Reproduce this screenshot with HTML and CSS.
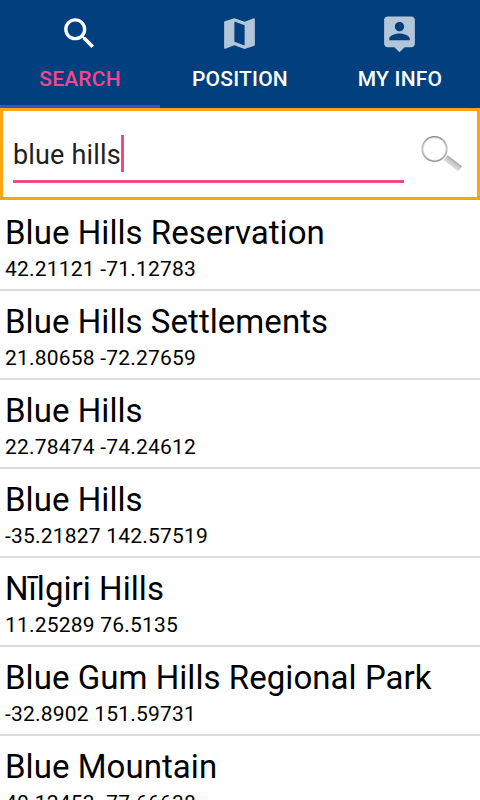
FILE: index.html
```html
<!DOCTYPE html>
<html lang="en">
<head>
  <meta charset="UTF-8">
  <meta name="viewport" content="width=device-width, initial-scale=1.0">
  <title>Search</title>
  <link rel="stylesheet" href="styles.css">
</head>
<body>
  <div class="tabs">
    <div class="tab active">
      <svg viewBox="0 0 24 24"><path d="M15.5 14h-.79l-.28-.27C15.41 12.59 16 11.11 16 9.5 16 5.91 13.09 3 9.5 3S3 5.91 3 9.5 5.91 16 9.5 16c1.61 0 3.09-.59 4.23-1.57l.27.28v.79l5 4.99L20.49 19l-4.99-5zm-6 0C7.01 14 5 11.99 5 9.5S7.01 5 9.5 5 14 7.01 14 9.5 11.99 14 9.5 14z"/></svg>
      <span>SEARCH</span>
    </div>
    <div class="tab">
      <svg viewBox="0 0 24 24"><path d="M20.5 3l-.16.03L15 5.1 9 3 3.36 4.9c-.21.07-.36.25-.36.48V20.5c0 .28.22.5.5.5l.16-.03L9 18.9l6 2.1 5.64-1.9c.21-.07.36-.25.36-.48V3.5c0-.28-.22-.5-.5-.5zM15 19l-6-2.11V5l6 2.11V19z"/></svg>
      <span>POSITION</span>
    </div>
    <div class="tab">
      <svg viewBox="0 0 24 24"><path d="M19 2H5c-1.11 0-2 .9-2 2v14c0 1.1.89 2 2 2h4l3 3 3-3h4c1.1 0 2-.9 2-2V4c0-1.1-.9-2-2-2zm-7 3.3c1.49 0 2.7 1.21 2.7 2.7 0 1.49-1.21 2.7-2.7 2.7-1.49 0-2.7-1.21-2.7-2.7 0-1.49 1.21-2.7 2.7-2.7zM18 16H6v-.9c0-2 4-3.1 6-3.1s6 1.1 6 3.1v.9z"/></svg>
      <span>MY INFO</span>
    </div>
  </div>

  <div class="search-box">
    <div class="field">
      <span class="query">blue hills</span><span class="cursor"></span>
    </div>
    <svg class="glass" viewBox="0 0 42 36">
      <defs>
        <linearGradient id="rim" x1="0" y1="0" x2="0" y2="1">
          <stop offset="0" stop-color="#8c8c8c"/>
          <stop offset="0.5" stop-color="#c4c4c4"/>
          <stop offset="1" stop-color="#8a8a8a"/>
        </linearGradient>
        <linearGradient id="handle" x1="0" y1="0" x2="0" y2="1">
          <stop offset="0" stop-color="#a2a2a2"/>
          <stop offset="0.4" stop-color="#cacaca"/>
          <stop offset="1" stop-color="#dadada"/>
        </linearGradient>
      </defs>
      <circle cx="13.5" cy="13" r="12" fill="none" stroke="#dcdcdc" stroke-width="2.4"/>
      <circle cx="13.5" cy="13" r="12.3" fill="none" stroke="url(#rim)" stroke-width="1.2"/>
      <rect x="0" y="-3.2" width="18.5" height="6.4" rx="1" transform="translate(24.5 21.7) rotate(37)" fill="url(#handle)"/>
    </svg>
  </div>

  <ul class="results">
    <li><h2>Blue Hills Reservation</h2><p>42.21121 -71.12783</p></li>
    <li><h2>Blue Hills Settlements</h2><p>21.80658 -72.27659</p></li>
    <li><h2>Blue Hills</h2><p>22.78474 -74.24612</p></li>
    <li><h2>Blue Hills</h2><p>-35.21827 142.57519</p></li>
    <li><h2>Nīlgiri Hills</h2><p>11.25289 76.5135</p></li>
    <li><h2>Blue Gum Hills Regional Park</h2><p>-32.8902 151.59731</p></li>
    <li><h2>Blue Mountain</h2><p>40.12453 -77.66638</p></li>
  </ul>
</body>
</html>
```
FILE: styles.css
```css
* {
  margin: 0;
  padding: 0;
  box-sizing: border-box;
}
body {
  font-family: Roboto, sans-serif;
  height: 100vh;
  overflow: hidden;
  background-color: #fff;
  color: #000;
}
.tabs {
  display: flex;
  height: 108px;
  background-color: #023f7e;
}
.tab {
  flex: 1;
  display: flex;
  flex-direction: column;
  align-items: center;
  padding-top: 13px;
  border-bottom: 3px solid transparent;
  color: #fff;
  font-size: 21px;
  font-weight: 500;
  line-height: 24px;
  letter-spacing: 0.2px;
}
.tab svg {
  width: 41px;
  height: 41px;
  margin: 0 1px 13px 0;
  fill: #b3c5d8;
}
.tab.active {
  border-bottom-color: #3f51b5;
  color: #f5468c;
}
.tab.active svg {
  fill: #fff;
}
.search-box {
  display: flex;
  align-items: flex-start;
  height: 92px;
  padding: 24px 14px 0 10px;
  border: 3px solid #ffa50f;
}
.field {
  display: flex;
  width: 391px;
  height: 48px;
  border-bottom: 3px solid #ec4b87;
}
.query {
  font-size: 27px;
  line-height: 41px;
  letter-spacing: 0.16px;
  color: #212121;
}
.cursor {
  width: 3px;
  height: 37px;
  background-color: #ec4b87;
}
.glass {
  width: 42px;
  height: 36px;
  margin: 1px 0 0 17px;
}
.results {
  list-style: none;
  padding-top: 2px;
}
.results li {
  height: 89px;
  padding: 11px 5px 0;
  border-bottom: 2px solid #dcdcdc;
  white-space: nowrap;
}
.results h2 {
  font-size: 33px;
  font-weight: 400;
  line-height: 40px;
  letter-spacing: 0.05px;
}
.results p {
  font-size: 21px;
  line-height: 24px;
  letter-spacing: 0.2px;
  margin-top: 4px;
}
```
